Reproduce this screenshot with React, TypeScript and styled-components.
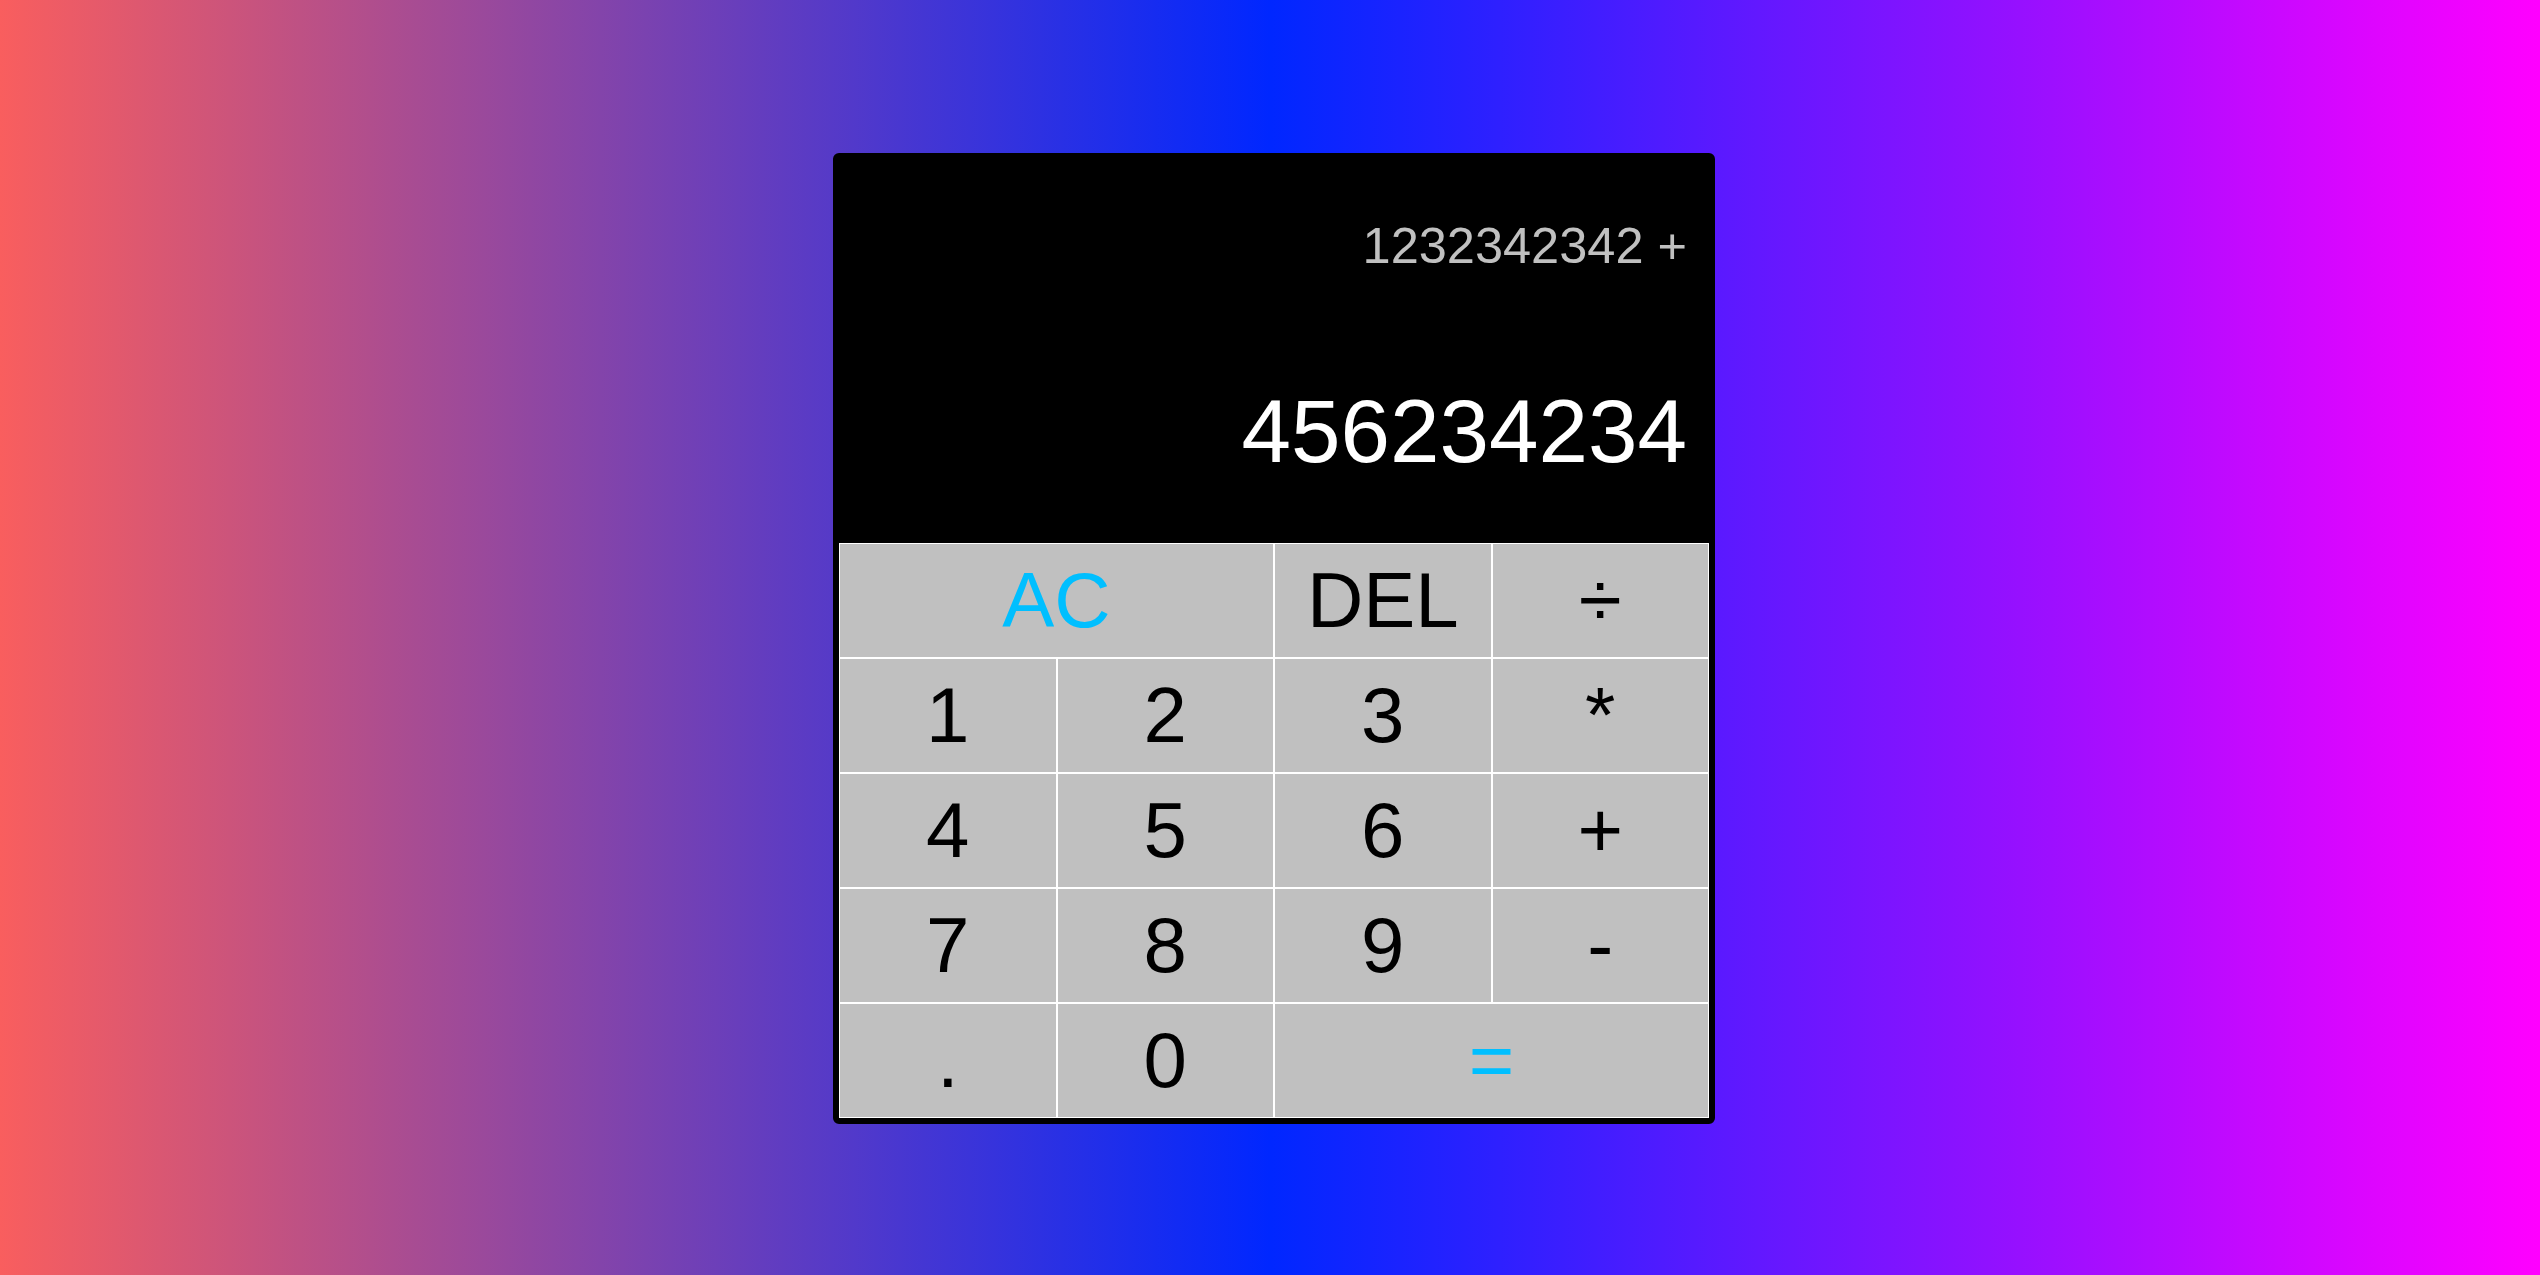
import React from 'react'
import styled, { createGlobalStyle } from 'styled-components'

const GlobalStyle = createGlobalStyle`
    * {
        box-sizing: border-box;
    }
    html, body {
        margin: 0;
        padding: 0;
    }
    body {
        font-family: "Liberation Sans", Arial, sans-serif;
        background: linear-gradient(to right, #f95e5e, #0027ff, #ff00ff);
        min-height: 100vh;
    }
`

const Page = styled.div`
    min-height: 100vh;
    display: flex;
    justify-content: center;
    align-items: center;
    padding-left: 8px;
    padding-top: 2px;
`

const CalculatorGrid = styled.div`
    display: grid;
    grid-template-columns: repeat(4, 217.5px);
    grid-template-rows: 384px repeat(5, 115px);
    background-color: black;
    border: 6px solid black;
    border-radius: 6px;
`

const Output = styled.div`
    grid-column: 1 / -1;
    display: flex;
    flex-direction: column;
    align-items: flex-end;
    justify-content: space-around;
    padding: 0 22px;
    word-break: break-all;
`

const PreviousOperand = styled.div`
    color: silver;
    font-size: 50.5px;
    margin-top: 5px;
`

const CurrentOperand = styled.div`
    color: white;
    font-size: 89px;
    margin-bottom: 8px;
`

const Key = styled.button<{ $span?: boolean; $accent?: boolean }>`
    grid-column: ${(p) => (p.$span ? 'span 2' : 'auto')};
    font-family: "Liberation Sans", Arial, sans-serif;
    font-size: 78px;
    color: ${(p) => (p.$accent ? '#00bfff' : 'black')};
    background-color: silver;
    border: 1px solid white;
    outline: none;
    padding: 0;
    cursor: pointer;
    &:hover {
        background-color: #d6d6d6;
    }
`

const App = () => {
    return (
        <>
            <GlobalStyle />
            <Page>
                <CalculatorGrid>
                    <Output>
                        <PreviousOperand>1232342342 +</PreviousOperand>
                        <CurrentOperand>456234234</CurrentOperand>
                    </Output>
                    <Key $span $accent>AC</Key>
                    <Key>DEL</Key>
                    <Key>÷</Key>
                    <Key>1</Key>
                    <Key>2</Key>
                    <Key>3</Key>
                    <Key>*</Key>
                    <Key>4</Key>
                    <Key>5</Key>
                    <Key>6</Key>
                    <Key>+</Key>
                    <Key>7</Key>
                    <Key>8</Key>
                    <Key>9</Key>
                    <Key>-</Key>
                    <Key>.</Key>
                    <Key>0</Key>
                    <Key $span $accent>=</Key>
                </CalculatorGrid>
            </Page>
        </>
    )
}

export default App
